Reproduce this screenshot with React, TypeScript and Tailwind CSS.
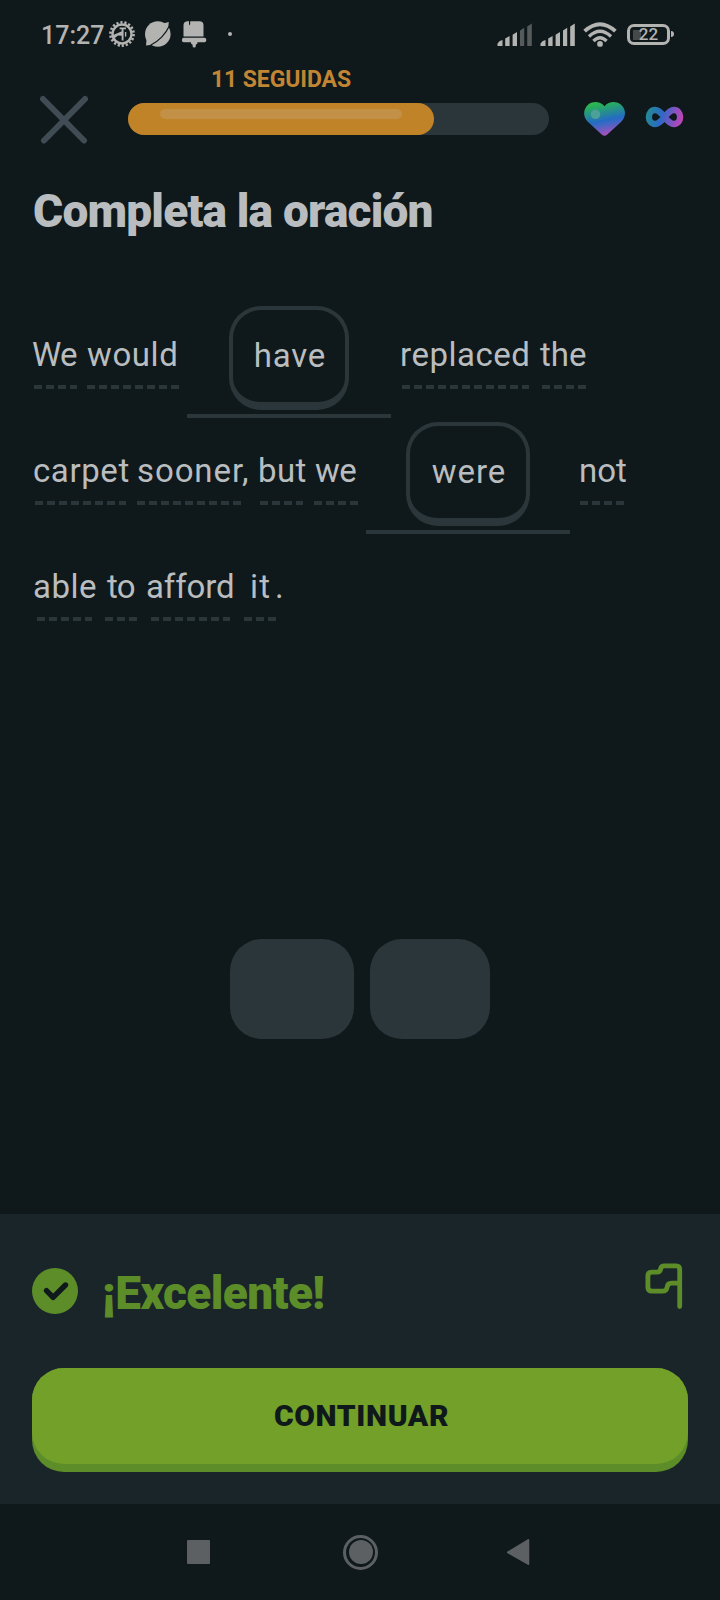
import type { ReactNode } from 'react';

function SettingsGear() {
  return (
    <svg className="h-[28px] w-[28px] shrink-0" viewBox="0 0 28 28" fill="none" stroke="#b3b3b2">
      <circle cx="14" cy="14" r="11.6" strokeWidth="2.6" strokeDasharray="2.2 1.85" />
      <circle cx="14" cy="14" r="9.5" strokeWidth="2.4" />
      <path d="M11.600 8.400h6.400M14.600 8.400v12.200" strokeWidth="1.900" />
      <path d="M3.500 15.800l7-3 4-1.800v4.800l-4.600-.4-3 2.600z" fill="#b3b3b2" stroke="none" />
      <path d="M17.600 12v4.600" strokeWidth="1.400" />
    </svg>
  );
}

function PlanetIcon() {
  return (
    <svg className="h-[28px] w-[28px] shrink-0" viewBox="0 0 28 28">
      <circle cx="13.800" cy="14" r="12.800" fill="#b3b3b2" />
      <path d="M19 3.400l5.800-1.400-.6 6z M2.600 19l-.6 6.600 6-.8z" fill="#b3b3b2" />
      <path d="M25 6.500C22 13.500 14.500 21.500 6.500 25.200" fill="none" stroke="#0f181a" strokeWidth="1.200" />
    </svg>
  );
}

function BellIcon() {
  return (
    <svg className="h-[28px] w-[26px] shrink-0" viewBox="0 0 26 28" fill="#b3b3b2">
      <path d="M6 1.200h2v4.200l1.200-1.300V1.200H18.500a4 4 0 0 1 4 4V16.500H2.500V5.200a4 4 0 0 1 3.500-4z" />
      <rect x="1" y="17.800" width="24.200" height="4.400" rx="1.600" />
      <path d="M10 22h6.400v1.500l-1.600 1.200v1.200a1.600 1.600 0 0 1-3.200 0v-1.200L10 23.500z" />
    </svg>
  );
}

function Signal({ weak }: { weak?: boolean }) {
  const rest = weak ? '#555a5b' : '#b3b3b2';
  return (
    <svg className="h-[24px] w-[36px] shrink-0" viewBox="0 0 36 24">
      <path d="M.5 23v-2.600q2-3 5-3.400v6z M8.200 23v-7.600l4.400-2.400v10z M15.600 23V11.700l4.400-2.700v14z" fill="#b3b3b2" />
      <path d="M23 23V7.600l4.200-2.800V23z M30.200 23V3.400L34.800.6V23z" fill={rest} />
    </svg>
  );
}

function WifiIcon() {
  return (
    <svg className="h-[26px] w-[34px] shrink-0" viewBox="0 0 34 26" fill="none" stroke="#b3b3b2">
      <path d="M1.600 9.200Q17-4.800 32.400 9.200" strokeWidth="3.800" />
      <path d="M6 14.400Q17 4.200 28 14.400" strokeWidth="3.400" />
      <path d="M10.400 19Q17 12.400 23.600 19" strokeWidth="3.200" />
      <circle cx="17" cy="21.900" r="2.900" fill="#b3b3b2" stroke="none" />
    </svg>
  );
}

function StatusBar() {
  return (
    <div className="flex h-[68px] items-center pl-[41px] text-[#b3b3b2]">
      <span className="mt-[3px] w-[67px] text-[25px] leading-[30px] font-medium whitespace-nowrap">17:27</span>
      <SettingsGear />
      <span className="w-2" />
      <PlanetIcon />
      <span className="w-[9px]" />
      <BellIcon />
      <span className="ml-[21px] h-1 w-1 rounded-full bg-[#b3b3b2]" />
      <div className="ml-[265px] flex items-center">
        <span className="mt-[2px] flex gap-[7px]">
          <Signal weak />
          <Signal />
        </span>
        <span className="mt-[2px] ml-[7px]">
          <WifiIcon />
        </span>
        <div className="ml-[10px] flex h-[21px] w-[43px] items-center justify-center rounded-[7px] border-[3px] border-[#b3b3b2] bg-[linear-gradient(#45494a,#45494a)] bg-[length:8px_10px] bg-[position:3px_3px] bg-no-repeat text-[17px] leading-none font-medium">
          22
        </div>
        <span className="ml-px h-1.5 w-[3px] rounded-r bg-[#b3b3b2]" />
      </div>
    </div>
  );
}

function LessonHeader() {
  return (
    <header className="flex h-[92px]">
      <svg className="mt-[27px] ml-[39px] h-[50px] w-[50px]" viewBox="0 0 50 50" stroke="#3f4c54" strokeWidth="6" strokeLinecap="round">
        <path d="M4 4L45 45.500M46 4L5 45.500" />
      </svg>
      <div className="ml-[39px] w-[421px]">
        <p className="-mt-px w-[306px] text-center text-[23px] leading-[26px] font-bold tracking-[-.1px] whitespace-nowrap text-[#c18534]">11 SEGUIDAS</p>
        <div className="mt-[10px] h-8 rounded-full bg-[#2b363b]">
          <div className="h-8 w-[306px] rounded-full bg-[#c18327] px-8 pt-1.5">
            <div className="h-2.5 rounded-full bg-[#c29046]" />
          </div>
        </div>
      </div>
      <svg className="mt-[33px] ml-[34px] h-[36px] w-[43px]" viewBox="0 0 43 36">
        <defs>
          <linearGradient id="heart" x1=".35" y1="0" x2=".6" y2="1">
            <stop offset="0" stopColor="#2eb84c" />
            <stop offset=".1" stopColor="#28ae5c" />
            <stop offset=".55" stopColor="#246bc4" />
            <stop offset=".65" stopColor="#3e68c5" />
            <stop offset="1" stopColor="#b64cb9" />
          </linearGradient>
        </defs>
        <path d="M21.500 5.200C17 .2 10.500-.2 5.500 3.200C.2 7.500-.4 15.500 4.500 20.400L18.700 33.500Q21.500 36 24.300 33.500L38.500 20.400C43.400 15.500 43.200 7.500 37.500 3.200C32.500-.2 26 .2 21.500 5.200z" fill="url(#heart)" />
        <circle cx="12.500" cy="13.300" r="4.800" fill="#4ba197" />
      </svg>
      <svg className="mt-[38px] ml-[19px] h-[22px] w-[39px]" viewBox="0 0 39 22">
        <defs>
          <linearGradient id="infinity" gradientUnits="userSpaceOnUse" x1="1" y1="6" x2="37" y2="15">
            <stop offset="0" stopColor="#238d91" />
            <stop offset=".42" stopColor="#2c69c4" />
            <stop offset=".7" stopColor="#7656c2" />
            <stop offset="1" stopColor="#c244b7" />
          </linearGradient>
        </defs>
        <path d="M19.500 11C16 6.500 13.500 4 10 4C6.500 4 3.900 7 3.900 11S6.500 18 10 18C13.500 18 16 15.500 19.500 11S25.500 4 29 4C32.500 4 35.100 7 35.100 11S32.500 18 29 18C25.500 18 23 15.500 19.500 11z" fill="none" stroke="url(#infinity)" strokeWidth="6.400" />
      </svg>
    </header>
  );
}

/** A hinted word: `box` sizes the dashed hint line, `text` nudges the glyphs over it. */
function Word({ box, text, children }: { box: string; text: string; children: ReactNode }) {
  return (
    <div className={`shrink-0 pt-[29px] ${box}`}>
      <div className={`h-[50px] leading-[40px] whitespace-nowrap ${text}`}>{children}</div>
      <div className="h-1 bg-[repeating-linear-gradient(90deg,#2b363b_0_8px,transparent_8px_12px)]" />
    </div>
  );
}

function Blank({ box, tile, children }: { box: string; tile: string; children: ReactNode }) {
  return (
    <div className={`flex h-28 w-[204px] shrink-0 flex-col items-center justify-between border-b-4 border-[#2b363b] ${box}`}>
      <div className={`flex h-[104px] items-center justify-center rounded-[32px] border-4 border-b-8 border-[#2b363b] pl-[2px] ${tile}`}>
        {children}
      </div>
    </div>
  );
}

function Sentence() {
  return (
    <div className="mt-[67px] text-[33px] text-[#b9bdbf]">
      <div className="flex h-[116px]">
        <Word box="ml-[34px] w-[43px]" text="-ml-[2px] tracking-[-.8px]">We</Word>
        <Word box="ml-[10px] w-[92px]" text="ml-0 tracking-[.6px]">would</Word>
        <Blank box="ml-[8px]" tile="w-[120px] tracking-[.8px]">have</Blank>
        <Word box="ml-[11px] w-[127px]" text="-ml-[2px] tracking-[.5px]">replaced</Word>
        <Word box="ml-[13px] w-[44px]" text="-ml-[2px]">the</Word>
      </div>
      <div className="flex h-[116px]">
        <Word box="ml-[35px] w-[91px]" text="-ml-[2px] tracking-[.6px]">carpet</Word>
        <Word box="ml-[11px] w-[104px]" text="tracking-[.9px]">sooner,</Word>
        <Word box="ml-[19px] w-[43px]" text="-ml-[2px] tracking-[.4px]">but</Word>
        <Word box="ml-[11px] w-[44px]" text="ml-px tracking-[-.5px]">we</Word>
        <Blank box="ml-[8px]" tile="w-[124px] tracking-[.9px]">were</Blank>
        <Word box="ml-[10px] w-[44px]" text="-ml-px">not</Word>
      </div>
      <div className="flex h-[116px]">
        <Word box="ml-[37px] w-[55px]" text="-ml-[4px] tracking-[.5px]">able</Word>
        <Word box="ml-[13px] w-[32px]" text="ml-[2px] tracking-[-.8px]">to</Word>
        <Word box="ml-[14px] w-[79px]" text="-ml-[5px] tracking-[-.1px]">afford</Word>
        <Word box="ml-[14px] w-[32px]" text="ml-[6px] tracking-[1.200px]">it</Word>
        <span className="-ml-px pt-[29px] leading-[40px]">.</span>
      </div>
    </div>
  );
}

function ResultSheet() {
  return (
    <section className="h-[290px] bg-[#1a252a] px-8 pt-[49px]">
      <div className="flex h-[105px]">
        <svg className="mt-[5px] h-[46px] w-[46px]" viewBox="0 0 46 46">
          <circle cx="23" cy="23" r="23" fill="#5c8d29" />
          <path d="M14.500 22.700l6.600 6.600L33.500 17" fill="none" stroke="#0f181a" strokeWidth="5.400" strokeLinecap="round" strokeLinejoin="round" />
        </svg>
        <p className="mt-[2px] ml-[24px] text-[46px] leading-[56px] font-black tracking-[-.6px] text-[#5c8d29]">¡Excelente!</p>
        <svg className="mr-[5px] ml-auto h-[48px] w-[40px]" viewBox="0 0 40 48" fill="none" stroke="#5c8d29" strokeWidth="4.800" strokeLinecap="round" strokeLinejoin="round">
          <path d="M36.700 43.500V6.500Q36.700 2.900 33.100 2.900H21.500Q18 2.900 17.600 6.200Q17 9.100 13.800 9.100H9Q4.900 9.100 4.900 13V24Q4.900 28.200 9 28.200H19.500Q23.600 28.200 24.100 24.200Q24.600 20.100 28.500 20.100H36.500" />
        </svg>
      </div>
      <button className="block h-[104px] w-full rounded-[32px] bg-[#5c8d29] pb-2">
        <span className="flex h-24 items-center justify-center rounded-[32px] bg-[#72a028] pb-[2px] pl-[3px] text-[30px] font-black tracking-[.6px] text-[#0f181a]">
          CONTINUAR
        </span>
      </button>
    </section>
  );
}

function NavigationBar() {
  return (
    <nav className="flex h-24 items-center">
      <span className="ml-[186.500px] h-[23.500px] w-[23.500px] rounded-[1px] bg-[#5c6062]" />
      <span className="ml-[133px] flex h-[35px] w-[35px] items-center justify-center rounded-full border-[3px] border-[#5c6062]">
        <span className="h-[24px] w-[24px] rounded-full bg-[#5c6062]" />
      </span>
      <svg className="ml-[128px] h-[28px] w-[24px]" viewBox="0 0 24 28" fill="#5c6062" stroke="#5c6062" strokeWidth="2" strokeLinejoin="round">
        <path d="M22.300 2v24L2 14.300z" />
      </svg>
    </nav>
  );
}

export default function App() {
  return (
    <div className="flex h-[1600px] w-[720px] flex-col overflow-hidden bg-[#0f181a] font-['Roboto',sans-serif]">
      <StatusBar />
      <LessonHeader />
      <main className="flex-1">
        <h1 className="mt-[23px] pl-[33px] text-[46px] leading-[56px] font-black tracking-[-.8px] text-[#b9bdbf]">Completa la oración</h1>
        <Sentence />
        <div className="mt-[285px] flex justify-center gap-4">
          <div className="h-[100px] w-[124px] rounded-[32px] bg-[#2b363b]" />
          <div className="h-[100px] w-[120px] rounded-[32px] bg-[#2b363b]" />
        </div>
      </main>
      <ResultSheet />
      <NavigationBar />
    </div>
  );
}
